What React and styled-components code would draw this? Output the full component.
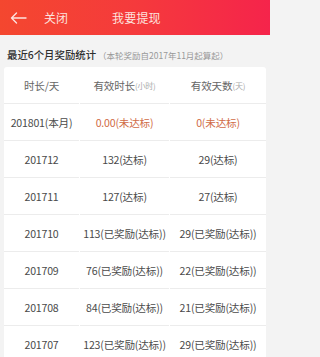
import React from "react";
import styled, { createGlobalStyle } from "styled-components";

const GlobalStyle = createGlobalStyle`
  body {
    margin: 0;
    background: #f3f3f3;
    font-family: "Noto Sans CJK SC", "Noto Sans", sans-serif;
  }
`;

const Page = styled.div`
  width: 270px;
  height: 357px;
  overflow: hidden;
  background: #f3f3f3;
`;

const TopBar = styled.div`
  height: 35px;
  display: flex;
  align-items: center;
  padding: 0 0 0 10px;
  background: linear-gradient(90deg, #f4472f 0%, #f53a3c 50%, #f5244b 100%);
  color: #fde3df;
  font-size: 12px;
`;

const Back = styled.div`
  display: flex;
  align-items: center;
  width: 34px;
`;

const CloseText = styled.span`
  width: 68px;
`;

const Title = styled.span`
  letter-spacing: 0.2px;
`;

const Heading = styled.div`
  display: flex;
  align-items: baseline;
  padding: 12px 0 0 7px;
  height: 20px;
  color: #2e2e2e;
  font-size: 10.4px;
  font-weight: 500;
  white-space: nowrap;
`;

const Note = styled.span`
  color: #999;
  font-size: 8.5px;
  font-weight: 400;
  margin-left: 2px;
`;

const Card = styled.div`
  margin: 0 4px;
  background: #fff;
  border-radius: 3px;
  display: grid;
  grid-template-columns: 75px 89px 1fr;
  column-gap: 1px;
  padding-bottom: 1px;
`;

const Cell = styled.div`
  height: 36px;
  display: flex;
  align-items: center;
  justify-content: center;
  border-bottom: 1px solid #ececec;
  font-size: 10.6px;
  color: ${(p) => (p.$warn ? "#d06a45" : "#4a4a4a")};
  white-space: nowrap;
  letter-spacing: -0.2px;
`;

const HeadCell = styled(Cell)`
  color: #666;
  font-size: 10.6px;
`;

const Unit = styled.span`
  color: #aaa;
  font-size: 8px;
`;

const rows = [
  ["201801(本月)", "0.00(未达标)", "0(未达标)", true],
  ["201712", "132(达标)", "29(达标)"],
  ["201711", "127(达标)", "27(达标)"],
  ["201710", "113(已奖励(达标))", "29(已奖励(达标))"],
  ["201709", "76(已奖励(达标))", "22(已奖励(达标))"],
  ["201708", "84(已奖励(达标))", "21(已奖励(达标))"],
  ["201707", "123(已奖励(达标))", "29(已奖励(达标))"],
];

export default function App() {
  return (
    <Page>
      <GlobalStyle />
      <TopBar>
        <Back>
          <svg width="17" height="12" viewBox="0 0 17 12" fill="none">
            <path
              d="M16 6H1.5M6.5 1L1.5 6l5 5"
              stroke="#fde3df"
              strokeWidth="1.4"
              strokeLinecap="round"
              strokeLinejoin="round"
            />
          </svg>
        </Back>
        <CloseText>关闭</CloseText>
        <Title>我要提现</Title>
      </TopBar>
      <Heading>
        最近6个月奖励统计
        <Note>（本轮奖励自2017年11月起算起）</Note>
      </Heading>
      <Card>
        <HeadCell>时长/天</HeadCell>
        <HeadCell>
          有效时长<Unit>(小时)</Unit>
        </HeadCell>
        <HeadCell>
          有效天数<Unit>(天)</Unit>
        </HeadCell>
        {rows.map(([month, hours, days, warn]) => (
          <React.Fragment key={month}>
            <Cell>{month}</Cell>
            <Cell $warn={warn}>{hours}</Cell>
            <Cell $warn={warn}>{days}</Cell>
          </React.Fragment>
        ))}
      </Card>
    </Page>
  );
}
